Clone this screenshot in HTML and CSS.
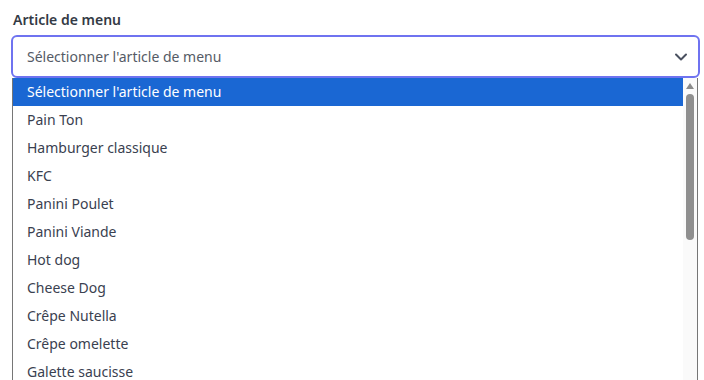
FILE: index.html
```html
<!DOCTYPE html>
<html lang="fr">
<head>
<meta charset="utf-8">
<link rel="stylesheet" href="styles.css">
</head>
<body>
<div class="field">
  <label class="label">Article de menu</label>
  <div class="select">
    <span class="value">Sélectionner l'article de menu</span>
    <svg class="chev" width="14" height="10" viewBox="0 0 14 10"><path d="M2 2.5 L7 7.5 L12 2.5" fill="none" stroke="#4a5160" stroke-width="2" stroke-linecap="round" stroke-linejoin="round"/></svg>
  </div>
  <div class="list">
    <ul class="options">
      <li class="opt active">Sélectionner l'article de menu</li>
      <li class="opt">Pain Ton</li>
      <li class="opt">Hamburger classique</li>
      <li class="opt">KFC</li>
      <li class="opt">Panini Poulet</li>
      <li class="opt">Panini Viande</li>
      <li class="opt">Hot dog</li>
      <li class="opt">Cheese Dog</li>
      <li class="opt">Crêpe Nutella</li>
      <li class="opt">Crêpe omelette</li>
      <li class="opt">Galette saucisse</li>
    </ul>
    <div class="scrollbar">
      <svg class="arrow" width="10" height="8" viewBox="0 0 10 8"><path d="M5 1 L9 7 L1 7 Z" fill="#8a8a8a"/></svg>
      <div class="thumb"></div>
    </div>
  </div>
</div>
</body>
</html>
```
FILE: styles.css
```css
html, body {
  margin: 0;
  padding: 0;
  background: #fff;
  overflow: hidden;
  height: 380px;
}
body {
  font-family: "Noto Sans", "Open Sans", sans-serif;
  font-size: 14px;
}
.field {
  padding: 10px 4px 0 11px;
  display: flex;
  flex-direction: column;
}
.label {
  font-weight: 600;
  font-size: 14px;
  color: #333a45;
  line-height: 20px;
  padding-left: 2px;
  margin-bottom: 5px;
}
.select {
  height: 43px;
  box-sizing: border-box;
  border: 2px solid #6f73f0;
  border-radius: 6px;
  display: flex;
  align-items: center;
  justify-content: space-between;
  padding: 0 10px 0 14px;
  color: #555b66;
}
.value {
  line-height: 20px;
}
.chev {
  display: block;
}
.list {
  margin: 0 2px 0 1px;
  border-left: 1px solid #767676;
  border-right: 1px solid #767676;
  display: flex;
  height: 310px;
  overflow: hidden;
}
.options {
  list-style: none;
  margin: 0;
  padding: 0;
  flex: 1;
}
.opt {
  height: 28px;
  line-height: 28px;
  padding-left: 14px;
  color: #3a4150;
  white-space: nowrap;
}
.opt.active {
  background: #1a67d3;
  color: #fff;
}
.scrollbar {
  width: 14px;
  background: #fafafa;
  display: flex;
  flex-direction: column;
  align-items: center;
  padding-top: 4px;
}
.arrow {
  display: block;
}
.thumb {
  margin-top: 4px;
  width: 8px;
  height: 146px;
  background: #8f8f8f;
  border-radius: 4px;
}
```
